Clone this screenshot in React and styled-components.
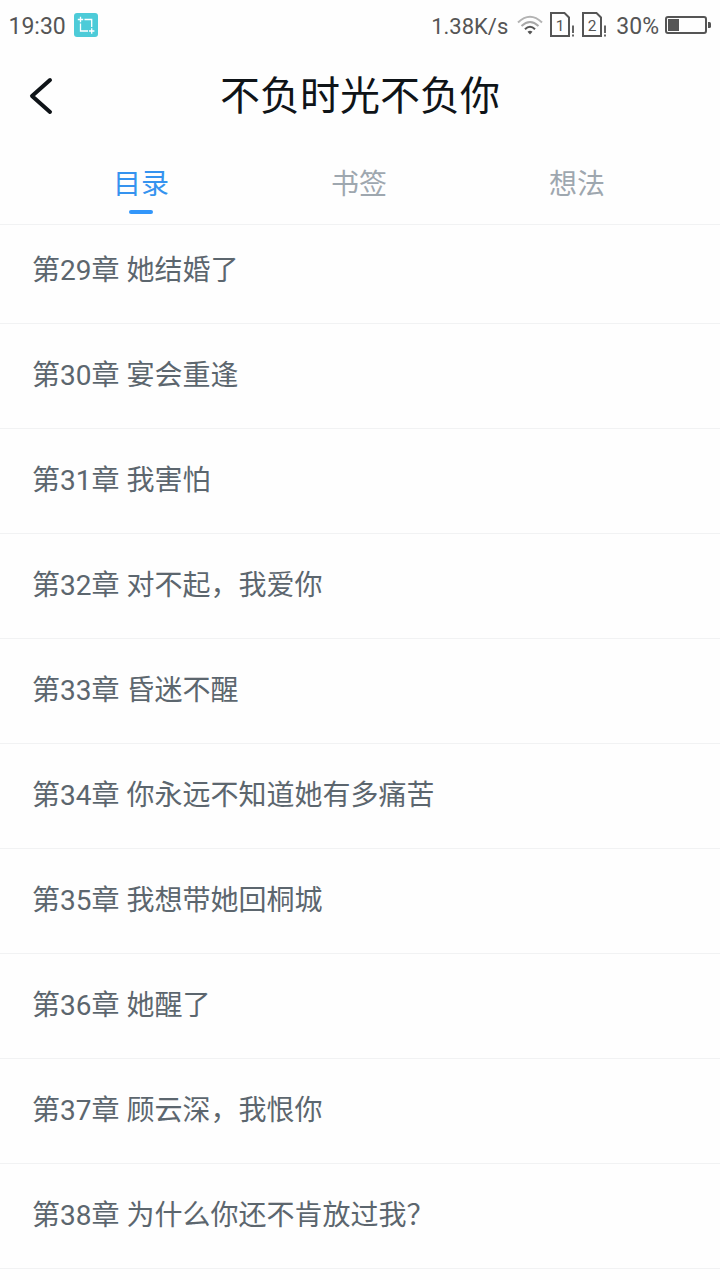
import React, { useState } from "react";
import styled, { createGlobalStyle } from "styled-components";

const GlobalStyle = createGlobalStyle`
  * {
    box-sizing: border-box;
  }
  body {
    margin: 0;
    background-color: #fefefe;
    font-family: Roboto, "Noto Sans CJK SC", sans-serif;
  }
`;

const Page = styled.div`
  width: 720px;
  height: 1280px;
  display: flex;
  flex-direction: column;
  overflow: hidden;
  background-color: #fefefe;
`;

const StatusBar = styled.div`
  height: 50px;
  padding: 0 9px 0 8.5px;
  display: flex;
  flex-shrink: 0;
  align-items: center;
  justify-content: space-between;
  color: #555;

  svg {
    display: block;
  }
`;

const StatusGroup = styled.div`
  display: flex;
  align-items: center;
`;

const StatusText = styled.span`
  font-size: ${(props) => props.$size}px;
  line-height: 48px;
  height: 50px;
  margin-right: ${(props) => props.$gap}px;
  padding-top: 3px;
`;

const Header = styled.header`
  height: 90px;
  flex-shrink: 0;
  display: grid;
  grid-template-columns: 80px 1fr 80px;
  align-items: center;
`;

const BackButton = styled.button`
  border: none;
  background: none;
  padding: 2px 0 0 26px;
  display: flex;
  cursor: pointer;
`;

const Title = styled.h1`
  margin: 0;
  padding-top: 4px;
  font-size: 40px;
  line-height: 86px;
  font-weight: 400;
  text-align: center;
  color: #0f1418;
`;

const Tabs = styled.nav`
  height: 85px;
  flex-shrink: 0;
  display: flex;
  padding: 0 34px 0 32px;
  border-bottom: 1px solid #f1f2f3;
`;

const Tab = styled.button`
  flex: 1;
  border: none;
  background: none;
  padding: 25px 0 0;
  display: flex;
  flex-direction: column;
  align-items: center;
  font-family: inherit;
  font-size: 28px;
  line-height: 40px;
  color: ${(props) => (props.$active ? "#3593ef" : "#9ea7af")};
  cursor: pointer;

  &::after {
    content: "";
    width: 24px;
    height: 4px;
    margin-top: 5px;
    border-radius: 2px;
    background-color: ${(props) => (props.$active ? "#3296fa" : "transparent")};
  }
`;

const ChapterList = styled.ul`
  flex: 1;
  min-height: 0;
  margin: 0;
  padding: 0;
  list-style: none;
  overflow: hidden;
`;

const Chapter = styled.li`
  height: 105px;
  padding: 0 32px;
  border-bottom: 1px solid #f1f2f3;
  font-size: 28px;
  line-height: 103px;
  color: #5c666e;

  /* the list is scrolled a little past the top of its first row */
  &:first-child {
    margin-top: -6px;
  }
`;

const tabs = ["目录", "书签", "想法"];

const chapters = [
  { id: 29, name: "她结婚了" },
  { id: 30, name: "宴会重逢" },
  { id: 31, name: "我害怕" },
  { id: 32, name: "对不起，我爱你" },
  { id: 33, name: "昏迷不醒" },
  { id: 34, name: "你永远不知道她有多痛苦" },
  { id: 35, name: "我想带她回桐城" },
  { id: 36, name: "她醒了" },
  { id: 37, name: "顾云深，我恨你" },
  { id: 38, name: "为什么你还不肯放过我？" },
];

const CropIcon = () => (
  <svg width="24" height="24" viewBox="0 0 24 24" fill="none">
    <rect width="24" height="24" rx="3" fill="#4dcbd8" />
    <g stroke="#fff" strokeWidth="1.3">
      <path d="M6.500 10.500V18H14M10.500 6.500H17.700V14" />
      <path d="M3.800 6.500h5.400M6.500 3.800v5.400M15 18h5.400M17.700 15.300v5.400" />
    </g>
  </svg>
);

const WifiIcon = () => (
  <svg width="26" height="20" viewBox="0 0 26 20" fill="none" strokeWidth="2">
    <path d="M1 7.500Q13 -4 25 7.500" stroke="#b3b3b3" />
    <path d="M4.500 11Q13 3 21.500 11" stroke="#a8a8a8" />
    <path d="M8 14.300Q13 9.300 18 14.300" stroke="#555" />
    <path d="M10.500 16.800Q13 14.800 15.500 16.800L13 19.600z" fill="#555" />
  </svg>
);

const SimIcon = ({ number }) => (
  <svg width="26" height="26" viewBox="0 0 26 26" fill="none">
    <path d="M1 1h13.500l4.500 4.500V24H1z" stroke="#555" strokeWidth="2" />
    <text x="10" y="19" fontSize="15.5" textAnchor="middle" fill="#555">{number}</text>
    <path d="M23 13.500v7.500M23 22.500v2" stroke="#555" strokeWidth="1.8" />
  </svg>
);

const BatteryIcon = () => (
  <svg width="46" height="18" viewBox="0 0 46 18" fill="none">
    <rect x="1" y="1" width="40" height="16" rx="2" stroke="#555" strokeWidth="2" />
    <rect x="3" y="3" width="11" height="12" fill="#555" />
    <path d="M43 6h1.500q1.500 0 1.500 1.500v3q0 1.500-1.500 1.500H43z" fill="#555" />
  </svg>
);

const SimSlot = styled.div`
  margin-right: ${(props) => props.$gap}px;
`;

const App = () => {
  const [activeTab, setActiveTab] = useState("目录");

  return (
    <>
      <GlobalStyle />
      <Page>
        <StatusBar>
          <StatusGroup>
            <StatusText $size={23} $gap={8}>19:30</StatusText>
            <CropIcon />
          </StatusGroup>
          <StatusGroup>
            <StatusText $size={22} $gap={9}>1.38K/s</StatusText>
            <SimSlot $gap={7}><WifiIcon /></SimSlot>
            <SimSlot $gap={6}><SimIcon number="1" /></SimSlot>
            <SimSlot $gap={8}><SimIcon number="2" /></SimSlot>
            <StatusText $size={23} $gap={6}>30%</StatusText>
            <BatteryIcon />
          </StatusGroup>
        </StatusBar>
        <Header>
          <BackButton aria-label="返回">
            <svg width="30" height="40" viewBox="0 0 30 40" fill="none">
              <path d="M24 4L6 20L24 36" stroke="#0f1418" strokeWidth="4" strokeLinecap="round" strokeLinejoin="round" />
            </svg>
          </BackButton>
          <Title>不负时光不负你</Title>
        </Header>
        <Tabs>
          {tabs.map((tab) => (
            <Tab key={tab} $active={activeTab === tab} onClick={() => setActiveTab(tab)}>
              {tab}
            </Tab>
          ))}
        </Tabs>
        <ChapterList>
          {chapters.map((chapter) => (
            <Chapter key={chapter.id}>第{chapter.id}章 {chapter.name}</Chapter>
          ))}
        </ChapterList>
      </Page>
    </>
  );
};

export default App;
